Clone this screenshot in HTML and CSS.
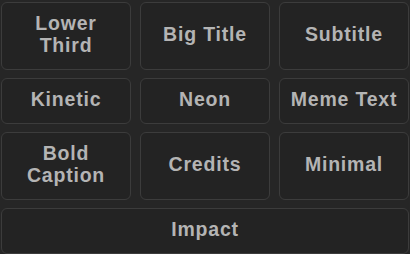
FILE: index.html
```html
<!DOCTYPE html>
<html lang="en">
<head>
  <meta charset="UTF-8">
  <meta name="viewport" content="width=device-width, initial-scale=1">
  <title>Text Presets</title>
  <link rel="stylesheet" href="styles.css">
</head>

<body>

  <div class="preset-grid">
    <button class="preset-btn">Lower<br>Third</button>
    <button class="preset-btn">Big Title</button>
    <button class="preset-btn">Subtitle</button>
    <button class="preset-btn">Kinetic</button>
    <button class="preset-btn">Neon</button>
    <button class="preset-btn">Meme Text</button>
    <button class="preset-btn">Bold<br>Caption</button>
    <button class="preset-btn">Credits</button>
    <button class="preset-btn">Minimal</button>
    <button class="preset-btn wide">Impact</button>
  </div>

</body>
</html>
```

FILE: styles.css
```css
body {
  font-family: 'Liberation Sans', Arial, sans-serif;
  background-color: #262626;
  margin: 0;
  color: #b4b4b4;
}

.preset-grid {
  display: grid;
  grid-template-columns: repeat(3, 1fr);
  gap: 8px 9px;
  padding: 2px 1px 0 1px;
}

.preset-btn {
  background-color: #232323;
  color: #b4b4b4;
  border: 1px solid #3c3c3c;
  border-radius: 6px;
  padding: 9px 6px 13px 6px;
  font-family: inherit;
  font-size: 19.5px;
  font-weight: bold;
  line-height: 22px;
  letter-spacing: 0.8px;
  cursor: pointer;
  display: flex;
  align-items: center;
  justify-content: center;
  text-align: center;
}

.preset-btn:hover {
  background-color: #2c2c2c;
}

.wide {
  grid-column: span 3;
}
```
